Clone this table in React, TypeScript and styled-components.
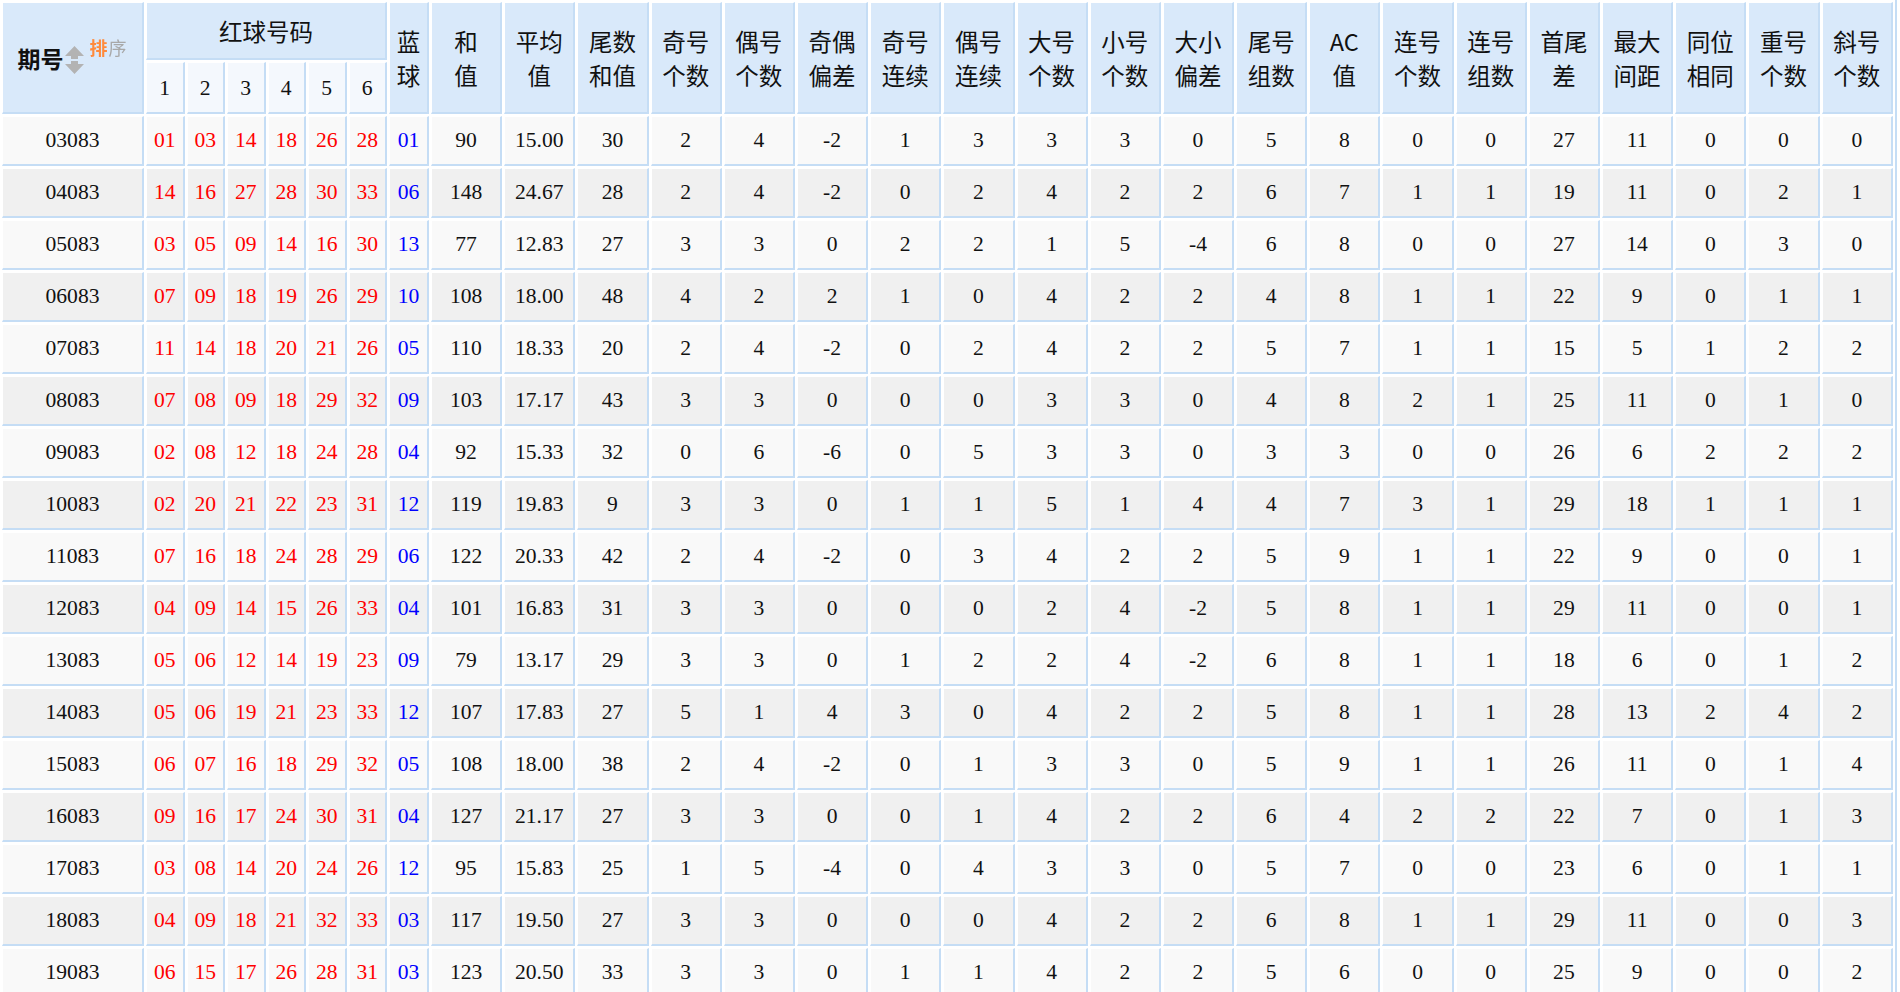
import React from "react";
import styled, { createGlobalStyle, css } from "styled-components";

const GlobalStyle = createGlobalStyle`
  html, body {
    margin: 0;
    padding: 0;
    background: #ffffff;
  }
  body {
    font-family: "Liberation Serif", "Noto Sans CJK SC", serif;
    color: #111;
  }
`;

const LINE = "#c5ddf5";

const Table = styled.table`
  width: 1897px;
  table-layout: fixed;
  border-collapse: separate;
  border-spacing: 2px;
  border-right: 2px solid ${LINE};
  font-family: "Liberation Serif", "Noto Sans CJK SC", serif;
`;

const cellBase = css`
  border-style: solid;
  border-width: 1px 2px 2px 1px;
  border-color: #ffffff ${LINE} ${LINE} #ffffff;
  text-align: center;
  vertical-align: middle;
  padding: 0;
  box-sizing: border-box;
`;

const HeadRow = styled.tr<{ $h: number }>`
  height: ${(p) => p.$h}px;
`;

const Head = styled.th<{ $light?: boolean }>`
  ${cellBase};
  background: ${(p) => (p.$light ? "#f4f8fd" : "#d9e9fa")};
  font-family: ${(p) =>
    p.$light
      ? `"Liberation Serif", serif`
      : `"Noto Sans CJK SC", "Liberation Serif", sans-serif`};
  font-size: ${(p) => (p.$light ? "21.6px" : "23.5px")};
  font-weight: normal;
  line-height: 34px;
  color: #111;
`;

const IssueHead = styled.div`
  display: inline-flex;
  align-items: center;
  font-weight: bold;
  font-size: 23px;
`;

const SortIcon = styled.svg`
  width: 19px;
  height: 28px;
  margin-left: 1px;
  margin-top: 4px;
  filter: blur(0.4px);
`;

const SortLabel = styled.span`
  align-self: flex-start;
  margin-top: -4px;
  margin-left: 6px;
  font-size: 18px;
  font-weight: bold;
  line-height: 20px;
  filter: blur(0.35px);
  letter-spacing: 1px;
`;

const SortA = styled.span`
  color: #ff8a3c;
`;

const SortB = styled.span`
  color: #a8a8a8;
  font-weight: normal;
`;

const Row = styled.tr<{ $alt: boolean }>`
  height: 50px;
  background: ${(p) => (p.$alt ? "#f0f0f0" : "#f9f9f9")};
`;

const Cell = styled.td<{ $tone?: "red" | "blue" }>`
  ${cellBase};
  font-size: 21.6px;
  color: ${(p) =>
    p.$tone === "red" ? "#ff0000" : p.$tone === "blue" ? "#0000ff" : "#111"};
`;

const statHeads = [
  ["和", "值"],
  ["平均", "值"],
  ["尾数", "和值"],
  ["奇号", "个数"],
  ["偶号", "个数"],
  ["奇偶", "偏差"],
  ["奇号", "连续"],
  ["偶号", "连续"],
  ["大号", "个数"],
  ["小号", "个数"],
  ["大小", "偏差"],
  ["尾号", "组数"],
  ["AC", "值"],
  ["连号", "个数"],
  ["连号", "组数"],
  ["首尾", "差"],
  ["最大", "间距"],
  ["同位", "相同"],
  ["重号", "个数"],
  ["斜号", "个数"],
];

const raw = `03083|01 03 14 18 26 28|01|90 15.00 30 2 4 -2 1 3 3 3 0 5 8 0 0 27 11 0 0 0
04083|14 16 27 28 30 33|06|148 24.67 28 2 4 -2 0 2 4 2 2 6 7 1 1 19 11 0 2 1
05083|03 05 09 14 16 30|13|77 12.83 27 3 3 0 2 2 1 5 -4 6 8 0 0 27 14 0 3 0
06083|07 09 18 19 26 29|10|108 18.00 48 4 2 2 1 0 4 2 2 4 8 1 1 22 9 0 1 1
07083|11 14 18 20 21 26|05|110 18.33 20 2 4 -2 0 2 4 2 2 5 7 1 1 15 5 1 2 2
08083|07 08 09 18 29 32|09|103 17.17 43 3 3 0 0 0 3 3 0 4 8 2 1 25 11 0 1 0
09083|02 08 12 18 24 28|04|92 15.33 32 0 6 -6 0 5 3 3 0 3 3 0 0 26 6 2 2 2
10083|02 20 21 22 23 31|12|119 19.83 9 3 3 0 1 1 5 1 4 4 7 3 1 29 18 1 1 1
11083|07 16 18 24 28 29|06|122 20.33 42 2 4 -2 0 3 4 2 2 5 9 1 1 22 9 0 0 1
12083|04 09 14 15 26 33|04|101 16.83 31 3 3 0 0 0 2 4 -2 5 8 1 1 29 11 0 0 1
13083|05 06 12 14 19 23|09|79 13.17 29 3 3 0 1 2 2 4 -2 6 8 1 1 18 6 0 1 2
14083|05 06 19 21 23 33|12|107 17.83 27 5 1 4 3 0 4 2 2 5 8 1 1 28 13 2 4 2
15083|06 07 16 18 29 32|05|108 18.00 38 2 4 -2 0 1 3 3 0 5 9 1 1 26 11 0 1 4
16083|09 16 17 24 30 31|04|127 21.17 27 3 3 0 0 1 4 2 2 6 4 2 2 22 7 0 1 3
17083|03 08 14 20 24 26|12|95 15.83 25 1 5 -4 0 4 3 3 0 5 7 0 0 23 6 0 1 1
18083|04 09 18 21 32 33|03|117 19.50 27 3 3 0 0 0 4 2 2 6 8 1 1 29 11 0 0 3
19083|06 15 17 26 28 31|03|123 20.50 33 3 3 0 1 1 4 2 2 5 6 0 0 25 9 0 0 2`;

const rows = raw.split("\n").map((line) => {
  const [issue, reds, blue, stats] = line.split("|");
  return { issue, reds: reds.split(" "), blue, stats: stats.split(" ") };
});

export default function App() {
  return (
    <>
      <GlobalStyle />
      <Table>
        <colgroup>
          <col style={{ width: 142 }} />
          {[0, 1, 2, 3, 4, 5].map((i) => (
            <col key={i} style={{ width: 38.5 }} />
          ))}
          <col style={{ width: 40 }} />
          {statHeads.map((_, i) => (
            <col key={"s" + i} />
          ))}
        </colgroup>
        <thead>
          <HeadRow $h={58}>
            <Head rowSpan={2}>
              <IssueHead>
                期号
                <SortIcon viewBox="0 0 19 28">
                  <path
                    d="M9.5 0 L19 10 L13 10 L13 13 L6 13 L6 10 L0 10 Z"
                    fill="#b3b3b3"
                  />
                  <path
                    d="M6 15 L13 15 L13 18 L19 18 L9.5 28 L0 18 L6 18 Z"
                    fill="#b3b3b3"
                  />
                </SortIcon>
                <SortLabel>
                  <SortA>排</SortA>
                  <SortB>序</SortB>
                </SortLabel>
              </IssueHead>
            </Head>
            <Head colSpan={6}>红球号码</Head>
            <Head rowSpan={2}>
              蓝<br />球
            </Head>
            {statHeads.map(([a, b], i) => (
              <Head key={i} rowSpan={2}>
                {a}
                <br />
                {b}
              </Head>
            ))}
          </HeadRow>
          <HeadRow $h={52}>
            {[1, 2, 3, 4, 5, 6].map((n) => (
              <Head key={n} $light>
                {n}
              </Head>
            ))}
          </HeadRow>
        </thead>
        <tbody>
          {rows.map((r, i) => (
            <Row key={r.issue} $alt={i % 2 === 1}>
              <Cell>{r.issue}</Cell>
              {r.reds.map((n, j) => (
                <Cell key={j} $tone="red">
                  {n}
                </Cell>
              ))}
              <Cell $tone="blue">{r.blue}</Cell>
              {r.stats.map((s, j) => (
                <Cell key={"s" + j}>{s}</Cell>
              ))}
            </Row>
          ))}
        </tbody>
      </Table>
    </>
  );
}
